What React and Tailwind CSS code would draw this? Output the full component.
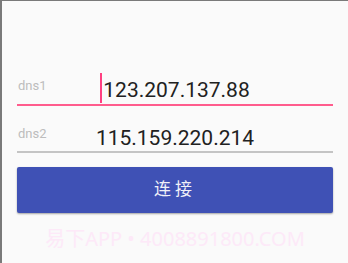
export default function App() {
  return (
    <div
      className="w-[348px] h-[263px] bg-[#fafafa] border-l-2 border-t border-[#7a7a7a] overflow-hidden"
      style={{ fontFamily: 'Roboto, "Noto Sans CJK SC", sans-serif' }}
    >
      <div className="pt-[72px] px-[15px]">
        {/* dns1 - focused */}
        <div className="relative h-[33px] border-b-2 border-[#ff5c8d]">
          <span className="absolute left-[1px] top-[6px] text-[13px] leading-none text-[#bdbdbd]">dns1</span>
          <div className="flex justify-center items-center h-[30px]">
            <span className="w-[2px] h-[30px] bg-[#ff4081] mr-[1px]" />
            <span className="text-[21px] leading-none text-[#212121] mt-[4px]">123.207.137.88</span>
          </div>
        </div>
        {/* dns2 */}
        <div className="relative h-[47px] border-b-2 border-[#c4c4c4]">
          <span className="absolute left-[1px] top-[21px] text-[13px] leading-none text-[#bdbdbd]">dns2</span>
          <div className="flex justify-center pt-[22px]">
            <span className="text-[21px] leading-none text-[#212121]">115.159.220.214</span>
          </div>
        </div>
        <button className="mt-[14px] w-full h-[46px] rounded-[2px] bg-[#3f51b5] text-[#f0f0f8] text-[17px] tracking-[4px] shadow-[0_1px_2px_rgba(0,0,0,0.35)] flex items-center justify-center">
          连接
        </button>
        <div
          className="mt-[16px] text-center text-[20px] leading-none text-[#fde9f8] whitespace-nowrap"
          style={{ fontFamily: '"Noto Sans", "Noto Sans CJK SC", sans-serif' }}
        >
          易下APP • 4008891800.COM
        </div>
      </div>
    </div>
  );
}
